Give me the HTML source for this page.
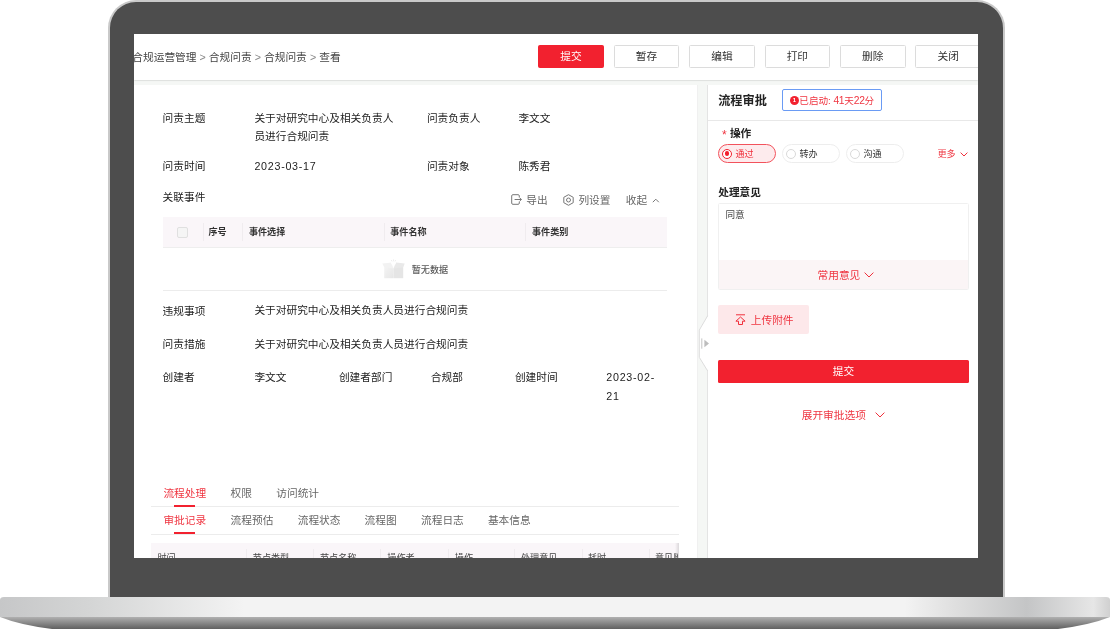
<!DOCTYPE html>
<html lang="zh-CN">
<head>
<meta charset="utf-8">
<title>合规问责</title>
<style>
*{box-sizing:border-box;margin:0;padding:0}
html,body{width:1110px;height:629px;overflow:hidden;background:#fff}
body{position:relative;font-family:"Liberation Sans","Noto Sans CJK SC",sans-serif;color:#222;-webkit-font-smoothing:antialiased}
#frame{position:absolute;left:108px;top:0;width:897px;height:598px;background:#4d4d4d;border:2px solid #c9c9c9;border-bottom:none;border-radius:28px 28px 0 0}
#screen{position:absolute;left:134px;top:34px;width:844px;height:524px;background:#f5f7f5;overflow:hidden}
#base{position:absolute;left:0;top:597px;width:1110px;height:32px}
#main,#pc,#tb{position:absolute;left:0;top:0;width:844px;height:524px;will-change:transform}
#tb{z-index:6}
.a{position:absolute;white-space:nowrap}
.t{position:absolute;white-space:nowrap;font-size:10.7px;line-height:20px;height:20px}
.g{color:#666}
.r{color:#ef3541}
.b{font-weight:700}
.s{font-size:9.1px}
.n{letter-spacing:.74px}
.d{font-size:10.3px;letter-spacing:-.35px;line-height:10px}
/* top bar */
#topbar{position:absolute;left:0;top:0;width:844px;height:45.6px;background:#fff;box-shadow:0 .5px 1.5px rgba(0,0,0,.22);z-index:5}
#maincard{position:absolute;left:0;top:50.6px;width:563.8px;height:480px;background:#fff;border-right:1px solid #f0f0f0}
  .btn{position:absolute;top:11.1px;width:65.5px;height:22.9px;border:1px solid #dcdcdc;border-radius:1.5px;background:#fff;font-size:10.7px;line-height:21.6px;text-align:center;color:#333}
.btn.p{background:#f2212f;border-color:#f2212f;color:#fff}
/* gutter */
#panel{position:absolute;left:573.2px;top:50.6px;width:272px;height:480px;background:#fff;border-left:1px solid #e4e4e4}
.pill{position:absolute;top:110.2px;width:58px;height:18.5px;border:1px solid #ededed;border-radius:10px;background:#fff}
.pill.on{border-color:#f2525c;background:#fdebed}
.pill i{position:absolute;left:3px;top:3.4px;width:10px;height:10px;border:1px solid #d9d9d9;border-radius:50%;background:#fff}
.pill.on i{border-color:#f2212f}
.pill.on i:after{content:"";position:absolute;left:1.7px;top:1.7px;width:4.8px;height:4.8px;border-radius:50%;background:#f2212f}
.pill span{position:absolute;left:16.6px;top:1px;font-size:9.1px;line-height:16.5px;color:#333}
.pill.on span{color:#f0303c}
/* table */
.th{position:absolute;background:#faf6f9}
.sep{position:absolute;width:1px;background:#f0ecef}
.hl{position:absolute;height:1px;background:#ececec}
</style>
</head>
<body>
<div id="frame"></div>
<svg id="base" viewBox="0 0 1110 32" preserveAspectRatio="none">
<defs>
<linearGradient id="bg1" x1="0" x2="1" y1="0" y2="0">
<stop offset="0" stop-color="#c6c7c8"/><stop offset="0.08" stop-color="#d4d5d5"/><stop offset="0.22" stop-color="#f3f3f3"/><stop offset="0.815" stop-color="#f3f3f3"/><stop offset="0.86" stop-color="#dfdfdf"/><stop offset="0.925" stop-color="#c4c5c6"/><stop offset="0.985" stop-color="#e6e6e6"/><stop offset="1" stop-color="#d0d0d0"/>
</linearGradient>
<linearGradient id="bg2" x1="0" x2="0" y1="0" y2="1">
<stop offset="0" stop-color="#b0b0b0"/><stop offset="1" stop-color="#606060"/>
</linearGradient>
</defs>
<path d="M0 20 L0 3 Q0 0 4 0 L1106 0 Q1110 0 1110 3 L1110 20 Z" fill="url(#bg1)"/>
<path d="M0 20 L1110 20 Q1090 28 1058 32 L52 32 Q20 28 0 20 Z" fill="url(#bg2)"/>
</svg>
<div id="screen">
 <div id="topbar"></div>
 <div id="tb">
  <div class="t" style="left:-1.7px;top:12.5px;color:#444;word-spacing:.12px">合规运营管理 <span style="color:#888">&gt;</span> 合规问责 <span style="color:#888">&gt;</span> 合规问责 <span style="color:#888">&gt;</span> 查看</div>
  <div class="btn p" style="left:404.2px">提交</div>
  <div class="btn" style="left:479.7px">暂存</div>
  <div class="btn" style="left:555.2px">编辑</div>
  <div class="btn" style="left:630.6px">打印</div>
  <div class="btn" style="left:706px">删除</div>
  <div class="btn" style="left:781.4px">关闭</div>
 </div>
 <div id="maincard"></div>
 <div id="main">
  <div class="t" style="left:28.6px;top:73.9px">问责主题</div>
  <div class="t" style="left:120.4px;top:73.6px">关于对研究中心及相关负责人</div>
  <div class="t" style="left:120.4px;top:91.8px">员进行合规问责</div>
  <div class="t" style="left:292.9px;top:73.9px">问责负责人</div>
  <div class="t" style="left:384.4px;top:73.9px">李文文</div>
  <div class="t" style="left:28.6px;top:122px">问责时间</div>
  <div class="t n" style="left:120.4px;top:122px">2023-03-17</div>
  <div class="t" style="left:292.9px;top:122px">问责对象</div>
  <div class="t" style="left:384.4px;top:122px">陈秀君</div>
  <div class="t" style="left:28.6px;top:153.4px">关联事件</div>
  <svg class="a" style="left:377.4px;top:160.4px" width="11" height="11" viewBox="0 0 11 11" fill="none" stroke="#777" stroke-width="1"><path d="M8.3 3.5V1.9Q8.3 .7 7.1 .7H1.9Q.7 .7 .7 1.9V9.1Q.7 10.3 1.9 10.3H7.1Q8.3 10.3 8.3 9.1V7.5"/><path d="M3.6 5.5H10.4M8.7 3.8L10.4 5.5L8.7 7.2"/></svg>
  <div class="t g" style="left:392.2px;top:156px">导出</div>
  <svg class="a" style="left:429.3px;top:160px" width="11" height="12" viewBox="0 0 11 12" fill="none" stroke="#777" stroke-width="1"><path d="M5.5 .7L10.2 3.3V8.7L5.5 11.3L.8 8.7V3.3Z"/><circle cx="5.5" cy="6" r="2"/></svg>
  <div class="t g" style="left:444.4px;top:156px">列设置</div>
  <div class="t g" style="left:491.7px;top:156px">收起</div>
  <svg class="a" style="left:517.6px;top:163.6px" width="8" height="5" viewBox="0 0 8 5" fill="none" stroke="#777" stroke-width="1"><path d="M.8 4.2L3.8 1.2L6.8 4.2"/></svg>
  <div class="th" style="left:28.7px;top:182.8px;width:504.3px;height:31.2px;border-bottom:1px solid #eee"></div>
  <div class="a" style="left:43px;top:192.7px;width:11px;height:11px;border:1px solid #e0e0e0;border-radius:2px;background:#f5f5f5"></div>
  <div class="sep" style="left:68.6px;top:189px;height:18px"></div>
  <div class="sep" style="left:108.3px;top:189px;height:18px"></div>
  <div class="sep" style="left:249.5px;top:189px;height:18px"></div>
  <div class="sep" style="left:390.8px;top:189px;height:18px"></div>
  <div class="t s b" style="left:74.4px;top:187.9px;color:#333">序号</div>
  <div class="t s b" style="left:114.9px;top:187.9px;color:#333">事件选择</div>
  <div class="t s b" style="left:256.2px;top:187.9px;color:#333">事件名称</div>
  <div class="t s b" style="left:398px;top:187.9px;color:#333">事件类别</div>
  <svg class="a" style="left:248px;top:224px" width="23" height="21" viewBox="0 0 23 21"><defs><linearGradient id="eb" x1="0" y1="0" x2="1" y2="1"><stop offset="0" stop-color="#f5f5f5"/><stop offset="1" stop-color="#e6e6e6"/></linearGradient></defs><path d="M2.2 7H11.5V20.2H2.2Z" fill="url(#eb)"/><path d="M11.5 7H21.2V20.2H11.5Z" fill="#e5e5e5"/><path d="M.3 5.6L9 4.5L11.5 10.6L2.2 9.2Z" fill="#f2f2f2"/><path d="M22.7 5.6L14 4.5L11.5 10.6L21.2 9.2Z" fill="#e9e9e9"/><path d="M9 4.5L11.5 10.6L14 4.5Z" fill="#fff"/><path d="M11.5 1.4V3.2M9.3 2L10 3.4M13.7 2L13 3.4" stroke="#eaeaea" stroke-width=".8"/></svg>
  <div class="t s" style="left:277.7px;top:225.5px;color:#5a5a5a;font-weight:500">暂无数据</div>
  <div class="hl" style="left:28.7px;top:256px;width:504.3px"></div>
  <div class="t" style="left:28.6px;top:267.2px">违规事项</div>
  <div class="t" style="left:120.4px;top:266.3px">关于对研究中心及相关负责人员进行合规问责</div>
  <div class="t" style="left:28.6px;top:300.1px">问责措施</div>
  <div class="t" style="left:120.4px;top:300.1px">关于对研究中心及相关负责人员进行合规问责</div>
  <div class="t" style="left:28.6px;top:333.2px">创建者</div>
  <div class="t" style="left:120.4px;top:333.2px">李文文</div>
  <div class="t" style="left:204.9px;top:333.2px">创建者部门</div>
  <div class="t" style="left:296.8px;top:333.2px">合规部</div>
  <div class="t" style="left:380.9px;top:333.2px">创建时间</div>
  <div class="t n" style="left:472.3px;top:333.2px">2023-02-</div>
  <div class="t n" style="left:472.3px;top:351.6px">21</div>
  <div class="t r" style="left:29.4px;top:449.2px">流程处理</div>
  <div class="t g" style="left:96.6px;top:449.2px">权限</div>
  <div class="t g" style="left:142.3px;top:449.2px">访问统计</div>
  <div class="hl" style="left:17.4px;top:472px;width:527.4px"></div>
  <div class="a" style="left:39.9px;top:471px;width:21.4px;height:2px;background:#f2212f"></div>
  <div class="t r" style="left:29.4px;top:476px">审批记录</div>
  <div class="t g" style="left:96.6px;top:476px">流程预估</div>
  <div class="t g" style="left:163.7px;top:476px">流程状态</div>
  <div class="t g" style="left:230.6px;top:476px">流程图</div>
  <div class="t g" style="left:287px;top:476px">流程日志</div>
  <div class="t g" style="left:353.9px;top:476px">基本信息</div>
  <div class="hl" style="left:17.4px;top:499.6px;width:527.4px"></div>
  <div class="a" style="left:39.9px;top:498.4px;width:21.4px;height:2px;background:#f2212f"></div>
  <div class="th" style="left:17.4px;top:509.1px;width:527.4px;height:30px"></div>
  <div class="a" style="left:540.8px;top:509.1px;width:4px;height:30px;background:linear-gradient(90deg,rgba(0,0,0,0),rgba(0,0,0,.12))"></div>
  <div class="sep" style="left:111.7px;top:515px;height:18px"></div>
  <div class="sep" style="left:178.9px;top:515px;height:18px"></div>
  <div class="sep" style="left:245.5px;top:515px;height:18px"></div>
  <div class="sep" style="left:313.6px;top:515px;height:18px"></div>
  <div class="sep" style="left:380.4px;top:515px;height:18px"></div>
  <div class="sep" style="left:447.6px;top:515px;height:18px"></div>
  <div class="sep" style="left:514.5px;top:515px;height:18px"></div>
  <div class="t s" style="left:23.4px;top:514.3px;color:#444">时间</div>
  <div class="t s" style="left:118.8px;top:514.3px;color:#444">节点类型</div>
  <div class="t s" style="left:186px;top:514.3px;color:#444">节点名称</div>
  <div class="t s" style="left:253.3px;top:514.3px;color:#444">操作者</div>
  <div class="t s" style="left:320.8px;top:514.3px;color:#444">操作</div>
  <div class="t s" style="left:387px;top:514.3px;color:#444">处理意见</div>
  <div class="t s" style="left:454px;top:514.3px;color:#444">耗时</div>
  <div class="t s" style="left:521px;top:514.3px;color:#444;width:23px;overflow:hidden">意见附件</div>
 </div>
  <div id="panel"></div>
 <div id="pc">
  <div class="t b" style="left:584.2px;top:56.6px;font-size:12.2px;color:#222">流程审批</div>
  <div class="a" style="left:647.9px;top:55.1px;width:100px;height:21.8px;border:1px solid #6a9bf4;border-radius:2px;background:#fff"></div>
  <div class="a" style="left:656px;top:61.8px;width:9px;height:9px;border-radius:50%;background:#f2212f;color:#fff;font-size:6px;line-height:9px;text-align:center;font-weight:700">1</div>
  <div class="t r" style="left:665.3px;top:56.8px;font-size:9.6px">已启动: <span class="d">41</span>天<span class="d">22</span>分</div>
  <div class="hl" style="left:574px;top:86px;width:270px;background:#e8e8e8"></div>
  <div class="t r" style="left:588px;top:91.2px;font-size:12px">*</div>
  <div class="t b" style="left:595.9px;top:88.9px">操作</div>
  <div class="pill on" style="left:583.9px"><i></i><span>通过</span></div>
  <div class="pill" style="left:647.9px"><i></i><span>转办</span></div>
  <div class="pill" style="left:711.9px"><i></i><span>沟通</span></div>
  <div class="t r s" style="left:803.5px;top:110.1px">更多</div>
  <svg class="a" style="left:825.5px;top:117.8px" width="8" height="5" viewBox="0 0 8 5" fill="none" stroke="#f0303c" stroke-width="1"><path d="M.6 .6L4 4L7.4 .6"/></svg>
  <div class="t b" style="left:584.2px;top:148.2px">处理意见</div>
  <div class="a" style="left:584.2px;top:169.2px;width:250.4px;height:86.4px;border:1px solid #f0f0f0;border-radius:1.5px;background:#fff"></div>
  <div class="a" style="left:585.2px;top:226px;width:248.4px;height:28.6px;background:#fbf5f6"></div>
  <div class="t" style="left:591.5px;top:170.9px;color:#444;font-size:9.6px">同意</div>
  <div class="t r" style="left:683.5px;top:231px">常用意见</div>
  <svg class="a" style="left:730px;top:238px" width="10" height="6" viewBox="0 0 10 6" fill="none" stroke="#f0303c" stroke-width="1"><path d="M.6 .6L5 5L9.4 .6"/></svg>
  <div class="a" style="left:584.2px;top:271.1px;width:90.8px;height:28.8px;border-radius:2px;background:#fde8ea"></div>
  <svg class="a" style="left:600.6px;top:279.6px" width="11" height="12" viewBox="0 0 11 12" fill="none" stroke="#f0303c" stroke-width="1"><path d="M1 .8H10"/><path d="M5.5 3L.9 7.2H3.5V10.5H7.5V7.2H10.1Z" stroke-linejoin="round"/></svg>
  <div class="t r" style="left:616.8px;top:275.8px">上传附件</div>
  <div class="a" style="left:584.2px;top:325.7px;width:250.4px;height:23px;border-radius:1.5px;background:#f2212f;color:#fff;font-size:10.7px;line-height:23px;text-align:center">提交</div>
  <div class="t r" style="left:667.7px;top:371.3px">展开审批选项</div>
  <svg class="a" style="left:740.5px;top:378.3px" width="10" height="6" viewBox="0 0 10 6" fill="none" stroke="#f0303c" stroke-width="1"><path d="M.6 .6L5 5L9.4 .6"/></svg>
  <svg class="a" style="left:563px;top:280px" width="14" height="60" viewBox="0 0 14 60"><path d="M11.4 1.2L2.3 16.1V43.3L11.4 57.6Z" fill="#fff"/><path d="M10.6 1.8L2.3 16.1V43.3L10.6 56.9" fill="none" stroke="#dcdcdc" stroke-width="1"/><path d="M4.8 24.4V34.7" stroke="#c4c4c4" stroke-width="1"/><path d="M7.4 25.8L12 29.5L7.4 33.3Z" fill="#bdbdbd"/></svg>
 </div>
</div>
</body>
</html>
